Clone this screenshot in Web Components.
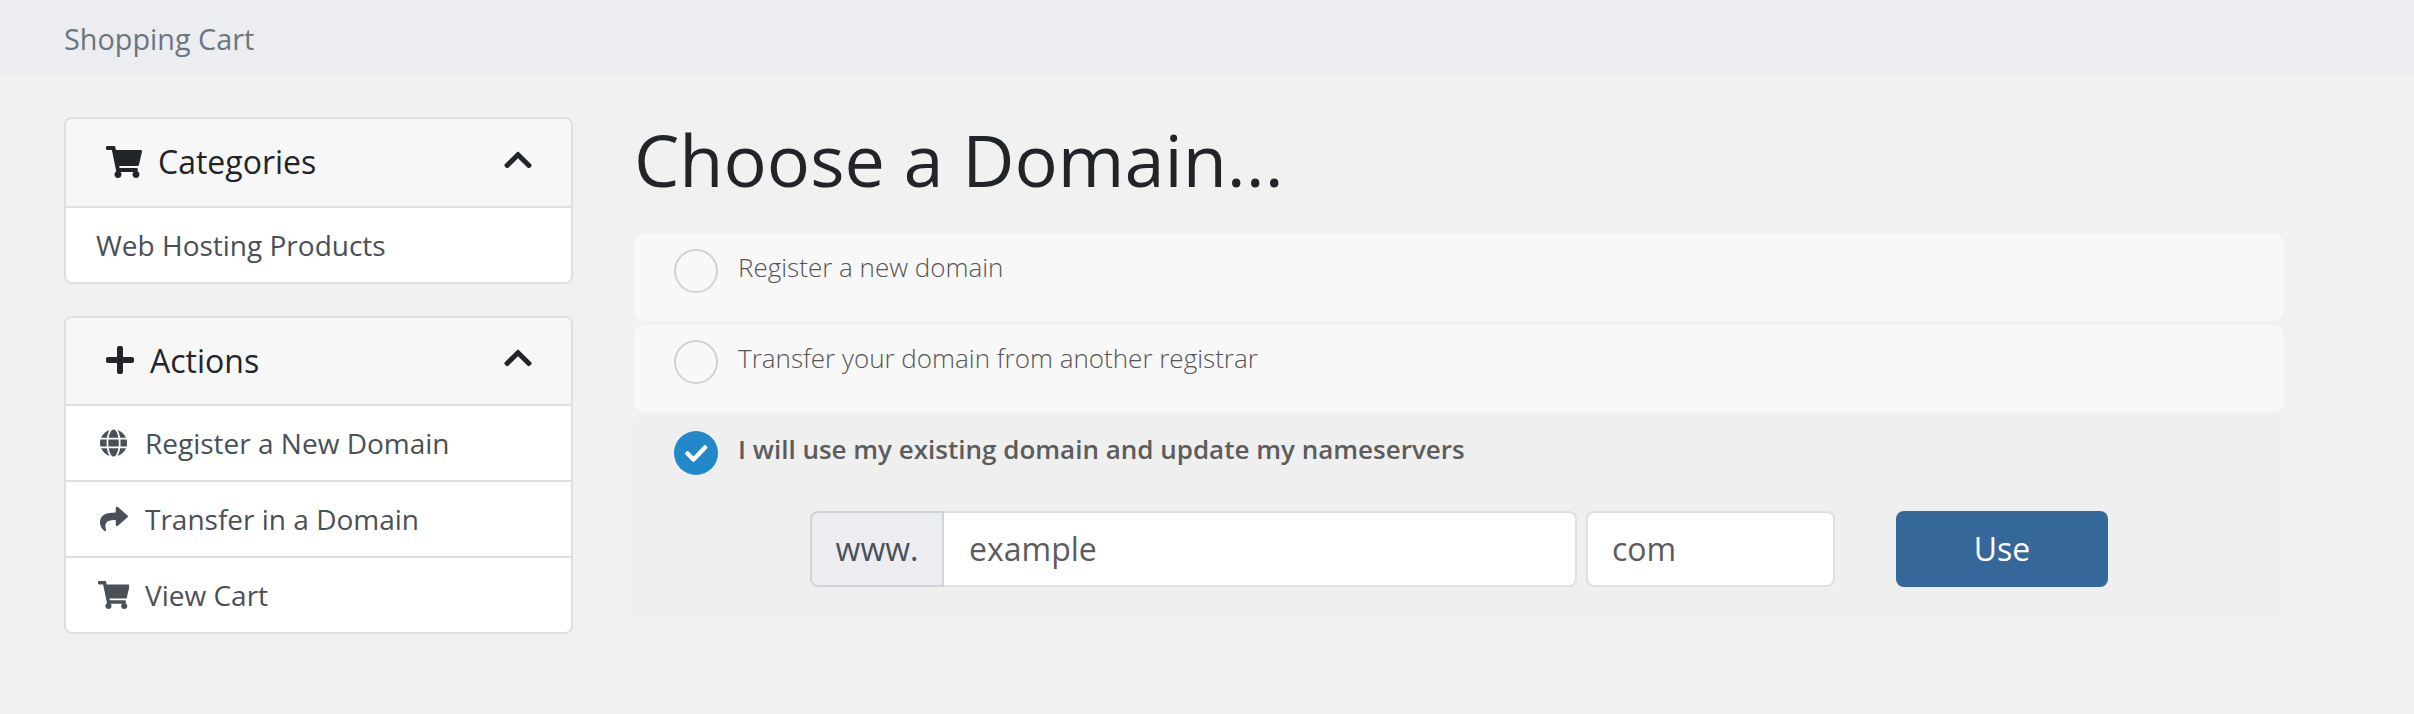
<!DOCTYPE html>
<html lang="en">
<head>
<meta charset="utf-8">
<title>Shopping Cart</title>
<style>
    html, body { margin: 0; background: #f1f1f1; font-family: "Open Sans", "Liberation Sans", sans-serif; }
</style>
</head>
<body>
<template id="fa-paths">
    <svg data-name="cart" viewBox="0 0 576 512"><path d="M528.12 301.319l47.273-208C578.806 78.301 567.391 64 551.99 64H159.208l-9.166-44.81C147.758 8.021 137.93 0 126.529 0H24C10.745 0 0 10.745 0 24v16c0 13.255 10.745 24 24 24h69.883l70.248 343.435C147.325 417.1 136 435.222 136 456c0 30.928 25.072 56 56 56s56-25.072 56-56c0-15.674-6.447-29.835-16.824-40h209.647C430.447 426.165 424 440.326 424 456c0 30.928 25.072 56 56 56s56-25.072 56-56c0-22.172-12.888-41.332-31.579-50.405l5.517-24.276c3.413-15.018-8.002-29.319-23.403-29.319H218.117l-6.545-32h293.145c11.206 0 20.92-7.754 23.403-18.681z"/></svg>
    <svg data-name="plus" viewBox="0 0 448 512"><path d="M416 208H272V64c0-17.67-14.33-32-32-32h-32c-17.67 0-32 14.33-32 32v144H32c-17.67 0-32 14.33-32 32v32c0 17.67 14.33 32 32 32h144v144c0 17.67 14.33 32 32 32h32c17.67 0 32-14.33 32-32V304h144c17.67 0 32-14.33 32-32v-32c0-17.67-14.33-32-32-32z"/></svg>
    <svg data-name="share" viewBox="0 0 512 512"><path d="M503.691 189.836L327.687 37.851C312.281 24.546 288 35.347 288 56.015v80.053C127.371 137.907 0 170.1 0 322.326c0 61.441 39.581 122.309 83.333 154.132 13.653 9.931 33.111-2.533 28.077-18.631C66.066 312.814 132.917 274.316 288 272.085V360c0 20.7 24.3 31.453 39.687 18.164l176.004-152c11.071-9.562 11.086-26.753 0-36.328z"/></svg>
    <svg data-name="globe" viewBox="0 0 496 512"><path d="M336.5 160C322 70.7 287.8 8 248 8s-74 62.7-88.5 152h177zM152 256c0 22.2 1.2 43.5 3.3 64h185.3c2.1-20.5 3.3-41.8 3.3-64s-1.2-43.5-3.3-64H155.3c-2.1 20.5-3.3 41.8-3.3 64zm324.7-96c-28.6-67.9-86.5-120.4-158-141.6 24.4 33.8 41.2 84.7 50 141.6h108zM177.2 18.4C105.8 39.6 47.8 92.1 19.3 160h108c8.7-56.9 25.5-107.8 49.9-141.6zM487.4 192H372.7c2.1 21 3.3 42.5 3.3 64s-1.2 43-3.3 64h114.6c5.5-20.5 8.6-41.8 8.6-64s-3.1-43.5-8.5-64zM120 256c0-21.5 1.2-43 3.3-64H8.6C3.2 212.5 0 233.8 0 256s3.2 43.5 8.6 64h114.6c-2-21-3.2-42.5-3.2-64zm39.5 96c14.5 89.3 48.7 152 88.5 152s74-62.7 88.5-152h-177zm159.3 141.6c71.4-21.2 129.4-73.7 158-141.6h-108c-8.8 56.9-25.6 107.8-50 141.6zM19.3 352c28.6 67.9 86.5 120.4 158 141.6-24.4-33.8-41.2-84.7-50-141.6h-108z"/></svg>
    <svg data-name="chevron" viewBox="0 0 448 512"><path d="M240.971 130.524l194.343 194.343c9.373 9.373 9.373 24.569 0 33.941l-22.667 22.667c-9.357 9.357-24.522 9.375-33.901.04L224 227.495 69.255 381.516c-9.379 9.335-24.544 9.317-33.901-.04l-22.667-22.667c-9.373-9.373-9.373-24.569 0-33.941L207.03 130.525c9.372-9.373 24.568-9.373 33.941-.001z"/></svg>
</template>

<shop-breadcrumb>Shopping Cart</shop-breadcrumb>

<shop-layout>
    <side-card slot="side" heading="Categories" icon="cart">
        <side-item>Web Hosting Products</side-item>
    </side-card>
    <side-card slot="side" heading="Actions" icon="plus" compact>
        <side-item icon="globe">Register a New Domain</side-item>
        <side-item icon="share">Transfer in a Domain</side-item>
        <side-item icon="cart">View Cart</side-item>
    </side-card>

    <h1-title>Choose a Domain...</h1-title>
    <domain-option>Register a new domain</domain-option>
    <domain-option>Transfer your domain from another registrar</domain-option>
    <domain-option checked>
        I will use my existing domain and update my nameservers
        <domain-form slot="extra" sld="example" tld="com" action="Use"></domain-form>
    </domain-option>
</shop-layout>

<script>
    function faIcon(name) {
        const svg = document.getElementById('fa-paths').content.querySelector(`[data-name="${name}"]`);
        return svg ? svg.outerHTML : '';
    }

    class ShopBreadcrumb extends HTMLElement {
        constructor() {
            super();
            this.attachShadow({ mode: 'open' }).innerHTML = `
                <style>
                    :host {
                        display: flex;
                        align-items: center;
                        height: 76px;
                        padding-left: 64px;
                        background: #ebedf0;
                        color: #6c757d;
                        font-size: 28.8px;
                    }
                </style>
                <slot></slot>
            `;
        }
    }

    class ShopLayout extends HTMLElement {
        constructor() {
            super();
            this.attachShadow({ mode: 'open' }).innerHTML = `
                <style>
                    :host {
                        display: grid;
                        grid-template-columns: 509px 1650px;
                        column-gap: 61px;
                        padding: 41px 0 0 64px;
                        align-items: start;
                    }
                    .side { display: flex; flex-direction: column; gap: 32px; }
                    .main { display: flex; flex-direction: column; }
                </style>
                <div class="side"><slot name="side"></slot></div>
                <div class="main"><slot></slot></div>
            `;
        }
    }

    class SideCard extends HTMLElement {
        constructor() {
            super();
            this.attachShadow({ mode: 'open' });
        }

        connectedCallback() {
            this.shadowRoot.innerHTML = `
                <style>
                    :host {
                        display: block;
                        background: #fff;
                        border: 2px solid #dfdfdf;
                        border-radius: 8px;
                        overflow: hidden;
                    }
                    header {
                        display: flex;
                        align-items: center;
                        box-sizing: border-box;
                        height: 87px;
                        padding: 0 39px 2px 40px;
                        background: #f7f7f7;
                        color: #212529;
                        font-size: 32px;
                    }
                    :host([compact]) header { height: 86px; }
                    .icon { display: block; height: 32px; fill: currentColor; margin-right: 16px; }
                    .icon svg { display: block; height: 32px; }
                    .chevron { margin: -4px 0 0 auto; width: 28px; height: 32px; fill: currentColor; }
                    .chevron svg { display: block; width: 28px; height: 32px; }
                </style>
                <header>
                    <span class="icon">${faIcon(this.getAttribute('icon'))}</span>
                    <span>${this.getAttribute('heading')}</span>
                    <span class="chevron">${faIcon('chevron')}</span>
                </header>
                <slot></slot>
            `;
        }
    }

    class SideItem extends HTMLElement {
        constructor() {
            super();
            this.attachShadow({ mode: 'open' });
        }

        connectedCallback() {
            const icon = this.getAttribute('icon');
            this.shadowRoot.innerHTML = `
                <style>
                    :host {
                        display: flex;
                        align-items: center;
                        height: 74px;
                        padding: 0 30px;
                        border-top: 2px solid #dfdfdf;
                        color: #495057;
                        font-size: 28px;
                    }
                    .icon {
                        display: flex;
                        justify-content: center;
                        flex: none;
                        width: 35px;
                        margin-right: 14px;
                        fill: currentColor;
                    }
                    .icon svg { display: block; height: 28px; }
                </style>
                ${icon ? `<span class="icon">${faIcon(icon)}</span>` : ''}
                <slot></slot>
            `;
        }
    }

    class H1Title extends HTMLElement {
        constructor() {
            super();
            this.attachShadow({ mode: 'open' }).innerHTML = `
                <style>
                    :host {
                        display: block;
                        height: 76px;
                        line-height: 76px;
                        margin: 4px 0 37px;
                        color: #212529;
                        font-size: 72px;
                    }
                </style>
                <slot></slot>
            `;
        }
    }

    class DomainOption extends HTMLElement {
        constructor() {
            super();
            this.attachShadow({ mode: 'open' });
        }

        connectedCallback() {
            this.shadowRoot.innerHTML = `
                <style>
                    :host {
                        display: block;
                        box-sizing: border-box;
                        min-height: 87px;
                        margin-bottom: 4px;
                        padding: 15px 40px 0;
                        border-radius: 10px;
                        background: #f8f8f8;
                        color: #555;
                        font-size: 26px;
                        font-weight: 300;
                    }
                    :host([checked]) {
                        background: #efefef;
                        color: #5c5c5c;
                        font-weight: 600;
                        padding-bottom: 34px;
                    }
                    .row { display: flex; align-items: flex-start; gap: 20px; }
                    .radio {
                        flex: none;
                        box-sizing: border-box;
                        width: 44px;
                        height: 44px;
                        border: 2px solid #d5d1cc;
                        border-radius: 50%;
                    }
                    :host([checked]) .radio {
                        border: 0;
                        background: #2288c9;
                    }
                    .radio svg { display: block; width: 44px; height: 44px; }
                    .label { line-height: 36px; }
                </style>
                <div class="row">
                    <span class="radio">${this.hasAttribute('checked') ? `
                        <svg viewBox="0 0 44 44"><polyline points="13.5,22.5 19.5,28.5 31,16.5" fill="none" stroke="#fff" stroke-width="4.5" stroke-linecap="round" stroke-linejoin="round"/></svg>
                    ` : ''}</span>
                    <span class="label"><slot></slot></span>
                </div>
                <slot name="extra"></slot>
            `;
        }
    }

    class DomainForm extends HTMLElement {
        constructor() {
            super();
            this.attachShadow({ mode: 'open' });
        }

        connectedCallback() {
            this.shadowRoot.innerHTML = `
                <style>
                    :host {
                        display: flex;
                        height: 76px;
                        margin: 36px 0 0 136px;
                        font-size: 32px;
                        font-weight: 400;
                        color: #5c5c5c;
                    }
                    .addon, .field {
                        box-sizing: border-box;
                        display: flex;
                        align-items: center;
                        border: 2px solid #dfe0e1;
                        padding: 0 24px 2px;
                    }
                    .addon {
                        width: 134px;
                        justify-content: center;
                        padding: 0 0 2px;
                        background: #ebedf0;
                        border-color: #ced4da;
                        border-radius: 8px 0 0 8px;
                        color: #495057;
                    }
                    .field { background: #fff; }
                    .sld { width: 633px; padding-left: 25px; border-radius: 0 8px 8px 0; border-left: 0; }
                    .tld { width: 249px; margin-left: 9px; border-radius: 8px; }
                    button {
                        width: 212px;
                        margin-left: 61px;
                        padding: 0 0 2px;
                        border: 0;
                        border-radius: 8px;
                        background: #36679a;
                        color: #fff;
                        font: inherit;
                    }
                </style>
                <span class="addon">www.</span>
                <span class="field sld">${this.getAttribute('sld')}</span>
                <span class="field tld">${this.getAttribute('tld')}</span>
                <button type="button">${this.getAttribute('action')}</button>
            `;
        }
    }

    customElements.define('shop-breadcrumb', ShopBreadcrumb);
    customElements.define('shop-layout', ShopLayout);
    customElements.define('side-card', SideCard);
    customElements.define('side-item', SideItem);
    customElements.define('h1-title', H1Title);
    customElements.define('domain-option', DomainOption);
    customElements.define('domain-form', DomainForm);
</script>
</body>
</html>
